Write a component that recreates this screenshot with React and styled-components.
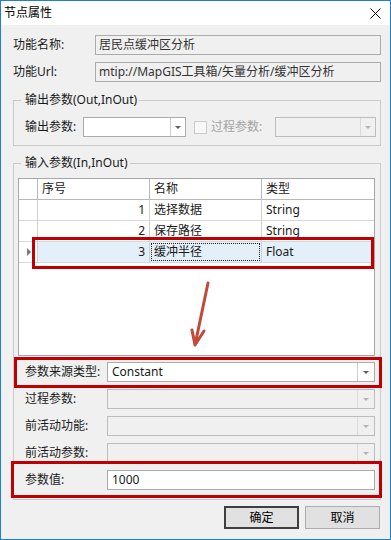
import React from 'react';
import styled, { createGlobalStyle } from 'styled-components';

const Global = createGlobalStyle`
  html, body { margin: 0; padding: 0; background: #ffffff; }
  body {
    font-family: "Noto Sans", "Noto Sans CJK SC", sans-serif;
    font-size: 12px;
    color: #1a1a1a;
  }
  * { box-sizing: border-box; }
`;

const Window = styled.div`
  width: 391px;
  height: 540px;
  border: 1px solid #1c80d6;
  background: #f0f0f0;
  display: flex;
  flex-direction: column;
`;

const TitleBar = styled.div`
  height: 24px;
  flex: none;
  background: #ffffff;
  display: flex;
  align-items: center;
  justify-content: space-between;
  padding: 0 9px 0 3px;
  font-size: 12px;
  line-height: 16px;
  color: #000;
`;

const Body = styled.div`
  flex: 1;
  display: flex;
  flex-direction: column;
  padding: 10px 9px 0 12px;
`;

const InfoRow = styled.div`
  display: grid;
  grid-template-columns: 82px 1fr;
  align-items: center;
  height: 20px;
  & + & { margin-top: 7px; }
`;

const Label = styled.div`
  line-height: 16px;
  white-space: nowrap;
  color: ${p => (p.$disabled ? '#a3a3a3' : '#1a1a1a')};
  ${p => (p.$w ? `width: ${p.$w}px; flex: none;` : '')}
`;

const ReadonlyBox = styled.div`
  height: 20px;
  border: 1px solid #ababab;
  background: #f0f0f0;
  padding: 0 3px;
  line-height: 18px;
  color: #333;
  white-space: nowrap;
  overflow: hidden;
`;

const Group = styled.fieldset`
  margin: ${p => p.$mt}px 0 0;
  padding: 0;
  border: 1px solid #cacaca;
  min-width: 0;
`;

const Legend = styled.legend`
  margin-left: 7px;
  padding: 0 2px 0 4px;
  line-height: 16px;
  font-size: 12px;
  color: #1a1a1a;
`;

const OutRow = styled.div`
  display: flex;
  align-items: center;
  padding: 9px 4px 8px 11px;
`;

const Combo = styled.div`
  ${p => (p.$w ? `width: ${p.$w}px; flex: none;` : 'flex: 1;')}
  height: 20px;
  display: flex;
  border: 1px solid ${p => (p.$disabled ? '#bdbdbd' : '#ababab')};
  background: ${p => (p.$disabled ? '#f0f0f0' : '#ffffff')};
`;

const ComboText = styled.div`
  flex: 1;
  padding: 0 4px;
  line-height: 18px;
  color: #1a1a1a;
  white-space: nowrap;
  overflow: hidden;
`;

const ComboButton = styled.div`
  width: ${p => p.$bw || 15}px;
  flex: none;
  border-left: 1px solid ${p => (p.$disabled ? '#dcdcdc' : '#cdcdcd')};
  display: flex;
  align-items: center;
  justify-content: center;
  &::after {
    content: '';
    border-left: 3px solid transparent;
    border-right: 3px solid transparent;
    border-top: 3px solid ${p => (p.$disabled ? '#b4b4b4' : '#606060')};
  }
`;

const CheckBox = styled.div`
  width: 13px;
  height: 13px;
  flex: none;
  border: 1px solid #cccccc;
  background: #f8f8f8;
  margin: 0 4px 0 8px;
`;

const InContent = styled.div`
  padding: 7px 5px 9px 4px;
`;

const GridWrap = styled.div`
  position: relative;
  height: 178px;
  border: 1px solid #a7a7a7;
  background: #ffffff;
`;

const GridRow = styled.div`
  display: grid;
  grid-template-columns: 19px 112px 112px 1fr;
  height: 21px;
`;

const Cell = styled.div`
  border-right: 1px solid ${p => (p.$head ? '#b9b9b9' : '#d0d0d0')};
  border-bottom: 1px solid ${p => (p.$head ? '#b9b9b9' : '#d8d8d8')};
  background: ${p => (p.$sel ? '#e3eff9' : '#ffffff')};
  line-height: 20px;
  padding: 0 4px;
  text-align: ${p => (p.$right ? 'right' : 'left')};
  white-space: nowrap;
  overflow: hidden;
  position: relative;
  display: flex;
  align-items: center;
  justify-content: ${p => (p.$right ? 'flex-end' : 'flex-start')};
  &:last-child { border-right: none; }
`;

const RowHeadCell = styled(Cell)`
  padding: 0;
  justify-content: center;
`;

const Pointer = styled.span`
  width: 0;
  height: 0;
  border-top: 4px solid transparent;
  border-bottom: 4px solid transparent;
  border-left: 4px solid #7a7a7a;
  margin-left: 2px;
`;

const FocusBox = styled.div`
  position: absolute;
  inset: 1px 1px 1px 1px;
  border: 1px dotted #222;
  pointer-events: none;
`;

const Highlight = styled.div`
  position: absolute;
  border: 3px solid #c00000;
  pointer-events: none;
  top: ${p => p.$t}px;
  left: ${p => p.$l}px;
  ${p => (p.$w != null ? `width: ${p.$w}px;` : `right: ${p.$r}px;`)}
  ${p => (p.$h != null ? `height: ${p.$h}px;` : `bottom: ${p.$b}px;`)}
`;

const Arrow = styled.svg`
  position: absolute;
  left: 165px;
  top: 100px;
  overflow: visible;
`;

const ParamList = styled.div`
  display: flex;
  flex-direction: column;
  gap: 7px;
  margin-top: 6px;
`;

const ParamRow = styled.div`
  position: relative;
  display: grid;
  grid-template-columns: 82px 1fr;
  align-items: center;
  height: 20px;
  padding-left: 7px;
`;

const ButtonBar = styled.div`
  display: flex;
  justify-content: flex-end;
  gap: 6px;
  margin-top: 6px;
  padding-right: 1px;
`;

const Button = styled.button`
  width: 75px;
  height: 23px;
  font-family: inherit;
  font-size: 12px;
  line-height: 16px;
  color: #000;
  background: #e1e1e1;
  border: ${p => (p.$default ? '2px solid #3f3f3f' : '1px solid #adadad')};
  padding: 0;
`;

const rows = [
  { no: 1, name: '选择数据', type: 'String' },
  { no: 2, name: '保存路径', type: 'String' },
  { no: 3, name: '缓冲半径', type: 'Float', sel: true },
];

function DropCombo({ w, disabled, text, bw }) {
  return (
    <Combo $w={w} $disabled={disabled}>
      <ComboText>{text}</ComboText>
      <ComboButton $disabled={disabled} $bw={bw} />
    </Combo>
  );
}

export default function App() {
  return (
    <>
      <Global />
      <Window>
        <TitleBar>
          <span>节点属性</span>
          <svg width="11" height="11" viewBox="0 0 11 11">
            <path d="M0.5 0.5 L10.5 10.5 M10.5 0.5 L0.5 10.5" stroke="#000" strokeWidth="1" />
          </svg>
        </TitleBar>
        <Body>
          <InfoRow>
            <Label>功能名称:</Label>
            <ReadonlyBox>居民点缓冲区分析</ReadonlyBox>
          </InfoRow>
          <InfoRow>
            <Label>功能Url:</Label>
            <ReadonlyBox>mtip://MapGIS工具箱/矢量分析/缓冲区分析</ReadonlyBox>
          </InfoRow>

          <Group $mt={10}>
            <Legend>输出参数(Out,InOut)</Legend>
            <OutRow>
              <Label $w={58}>输出参数:</Label>
              <DropCombo w={103} />
              <CheckBox />
              <Label $w={64} $disabled>过程参数:</Label>
              <DropCombo w={101} disabled />
            </OutRow>
          </Group>

          <Group $mt={9}>
            <Legend>输入参数(In,InOut)</Legend>
            <InContent>
              <GridWrap>
                <GridRow>
                  <Cell $head />
                  <Cell $head>序号</Cell>
                  <Cell $head>名称</Cell>
                  <Cell $head>类型</Cell>
                </GridRow>
                {rows.map(r => (
                  <GridRow key={r.no}>
                    <RowHeadCell>{r.sel && <Pointer />}</RowHeadCell>
                    <Cell $sel={r.sel} $right>{r.no}</Cell>
                    <Cell $sel={r.sel}>
                      {r.name}
                      {r.sel && <FocusBox />}
                    </Cell>
                    <Cell $sel={r.sel}>{r.type}</Cell>
                  </GridRow>
                ))}
                <Highlight $t={58} $l={13} $w={342} $h={32} />
                <Arrow width="30" height="70" viewBox="0 0 30 70">
                  <path
                    d="M24 4 L11 66 M8 51 L11 66 L20 52"
                    fill="none"
                    stroke="#c24a3c"
                    strokeWidth="3"
                    strokeLinecap="round"
                    strokeLinejoin="round"
                  />
                </Arrow>
              </GridWrap>

              <ParamList>
                <ParamRow>
                  <Label>参数来源类型:</Label>
                  <DropCombo text="Constant" bw={17} />
                  <Highlight $t={-5} $l={-4} $r={-7} $b={-6} />
                </ParamRow>
                <ParamRow>
                  <Label>过程参数:</Label>
                  <DropCombo disabled bw={17} />
                </ParamRow>
                <ParamRow>
                  <Label>前活动功能:</Label>
                  <DropCombo disabled bw={17} />
                </ParamRow>
                <ParamRow>
                  <Label>前活动参数:</Label>
                  <DropCombo disabled bw={17} />
                </ParamRow>
                <ParamRow>
                  <Label>参数值:</Label>
                  <Combo>
                    <ComboText>1000</ComboText>
                  </Combo>
                  <Highlight $t={-9} $l={-7} $r={-7} $b={-8} />
                </ParamRow>
              </ParamList>
            </InContent>
          </Group>

          <ButtonBar>
            <Button $default>确定</Button>
            <Button>取消</Button>
          </ButtonBar>
        </Body>
      </Window>
    </>
  );
}
